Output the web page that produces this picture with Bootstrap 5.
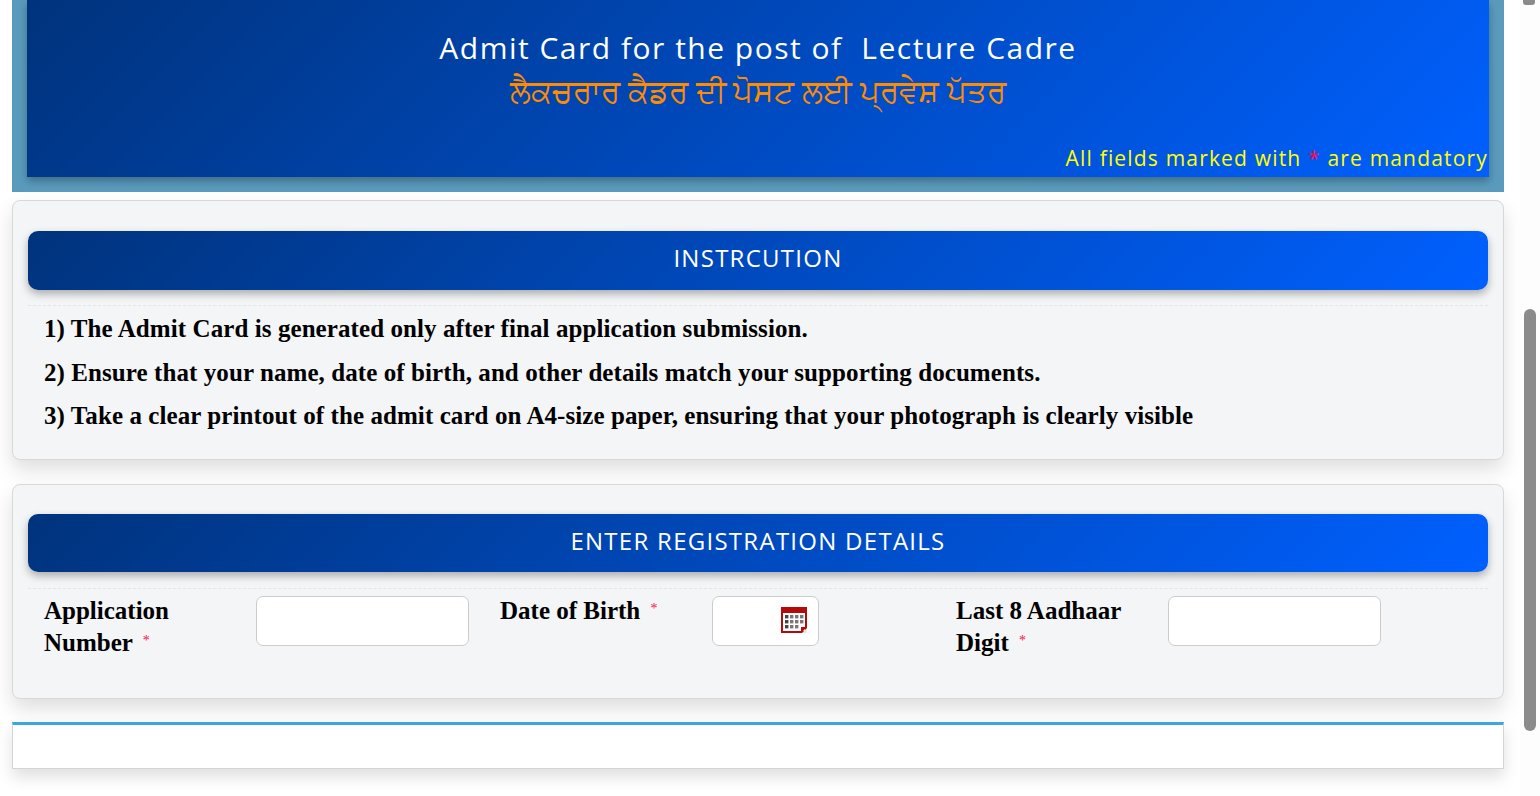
<!DOCTYPE html>
<html lang="en">
<head>
<meta charset="utf-8">
<title>Admit Card</title>
<link href="https://cdn.jsdelivr.net/npm/bootstrap@5.3.0/dist/css/bootstrap.min.css" rel="stylesheet">
<style>
html,body{height:796px;overflow:hidden;background:#fff;}
body{position:relative;font-family:"Liberation Serif",serif;color:#000;}
.page-wrap{width:1492px;margin-left:12px;}
.hero-band{height:192px;background:#5a9bbd;padding:0 15px;}
.hero-panel{height:177px;background:linear-gradient(135deg,#00337c,#0060ff);box-shadow:0 4px 8px rgba(0,0,0,.3);padding-top:27px;color:#fff;font-family:"Noto Sans","DejaVu Sans",sans-serif;}
.hero-title{font-size:30px;line-height:42px;letter-spacing:1.5px;white-space:pre;font-family:"Open Sans",sans-serif;}
.hero-sub{font-size:30.5px;line-height:44px;color:#ff8c00;margin-top:-1px;}
.hero-note{font-size:21px;line-height:26px;letter-spacing:1.18px;color:#ff0;text-align:right;margin-top:33px;padding-right:1px;font-family:"Open Sans",sans-serif;}
.req{color:#ff0a50;}
.panel-box{background:#f4f5f7;border:1px solid #d8d8d8;border-radius:8px;box-shadow:0 10px 20px rgba(0,0,0,.13);padding:30px 15px 0;}
.box-one{height:260px;margin-top:8px;}
.box-two{height:215px;margin-top:24px;padding-top:29px;}
.head-bar{height:59px;line-height:53px;border-radius:10px;background:linear-gradient(135deg,#00337c,#0060ff);box-shadow:0 4px 8px rgba(0,0,0,.3);color:#fff;text-align:center;font-size:24px;letter-spacing:1.27px;font-family:"Open Sans",sans-serif;}
.box-two .head-bar{height:58px;}
.dash-rule{border-top:1px dashed #e4e5e7;margin-top:15px;}
.box-two .dash-rule{margin-top:16px;}
.notes{padding:6px 16px 0;font-weight:700;font-size:25px;line-height:33px;letter-spacing:.08px;}
.notes p{margin:0 0 10.5px;white-space:nowrap;}
.form-row{width:1368px;padding-top:7px;}
.field-label{padding:0 16px;font-weight:700;font-size:25px;line-height:32px;height:64px;margin-top:-1px;}
.field-label .req{font-size:14px;line-height:0;vertical-align:6px;margin-left:4px;font-weight:400;}
.field-input{display:block;height:50px;width:213px;background:#fff;border:1px solid #ccc;border-radius:7px;}
.date-input{width:107px;position:relative;}
.date-input svg{position:absolute;left:68px;top:10px;}
.foot-box{height:47px;margin-top:23px;background:#fff;border:1px solid #d5d5d5;border-top:3px solid #3aa8dc;box-shadow:0 8px 16px rgba(0,0,0,.13);}
.scroll-track{position:absolute;top:0;right:0;width:20px;height:796px;background:#fdfdfd;}
.scroll-thumb{position:absolute;left:4px;top:309px;width:12px;height:422px;border-radius:6px;background:#8b8b8b;}
.scroll-cap{position:absolute;left:3px;top:-7px;width:12px;height:12px;border-radius:3px;background:#8b8b8b;}
</style>
</head>
<body>
<div class="page-wrap">
  <div class="hero-band">
    <div class="hero-panel text-center">
      <div class="hero-title">Admit Card for the post of  Lecture Cadre</div>
      <div class="hero-sub">ਲੈਕਚਰਾਰ ਕੈਡਰ ਦੀ ਪੋਸਟ ਲਈ ਪ੍ਰਵੇਸ਼ ਪੱਤਰ</div>
      <div class="hero-note">All fields marked with <span class="req">*</span> are mandatory</div>
    </div>
  </div>
  <div class="panel-box box-one">
    <div class="head-bar">INSTRCUTION</div>
    <div class="dash-rule"></div>
    <div class="notes">
      <p>1) The Admit Card is generated only after final application submission.</p>
      <p>2) Ensure that your name, date of birth, and other details match your supporting documents.</p>
      <p>3) Take a clear printout of the admit card on A4-size paper, ensuring that your photograph is clearly visible</p>
    </div>
  </div>
  <div class="panel-box box-two">
    <div class="head-bar">ENTER REGISTRATION DETAILS</div>
    <div class="dash-rule"></div>
    <div class="row g-0 form-row">
      <div class="col-4"><div class="row g-0">
        <div class="col-6 field-label">Application Number <span class="req">*</span></div>
        <div class="col-6"><div class="field-input"></div></div>
      </div></div>
      <div class="col-4"><div class="row g-0">
        <div class="col-6 field-label">Date of Birth <span class="req">*</span></div>
        <div class="col-6"><div class="field-input date-input">
          <svg width="26" height="26" viewBox="0 0 26 26"><rect width="26" height="26" fill="#b30a0a"/><rect x="2" y="6" width="22" height="18" fill="#fff"/><g fill="#777"><rect x="4" y="8" width="3.4" height="3.4" fill="#444"/><rect x="9" y="8" width="3.4" height="3.4"/><rect x="14" y="8" width="3.4" height="3.4"/><rect x="19" y="8" width="3.4" height="3.4"/><rect x="4" y="13" width="3.4" height="3.4" fill="#444"/><rect x="9" y="13" width="3.4" height="3.4"/><rect x="14" y="13" width="3.4" height="3.4"/><rect x="19" y="13" width="3.4" height="3.4"/><rect x="4" y="18" width="3.4" height="3.4" fill="#444"/><rect x="9" y="18" width="3.4" height="3.4"/><rect x="14" y="18" width="3.4" height="3.4"/></g><path d="M21 26 L26 21 V26 Z" fill="#e8e8e8"/><path d="M20 26 V20 H26 Z" fill="#b30a0a"/></svg>
        </div></div>
      </div></div>
      <div class="col-4"><div class="row g-0">
        <div class="col-6 field-label">Last 8 Aadhaar Digit <span class="req">*</span></div>
        <div class="col-6"><div class="field-input"></div></div>
      </div></div>
    </div>
  </div>
  <div class="foot-box"></div>
</div>
<div class="scroll-track"><div class="scroll-cap"></div><div class="scroll-thumb"></div></div>
<script src="https://cdn.jsdelivr.net/npm/bootstrap@5.3.0/dist/js/bootstrap.bundle.min.js"></script>
</body>
</html>
